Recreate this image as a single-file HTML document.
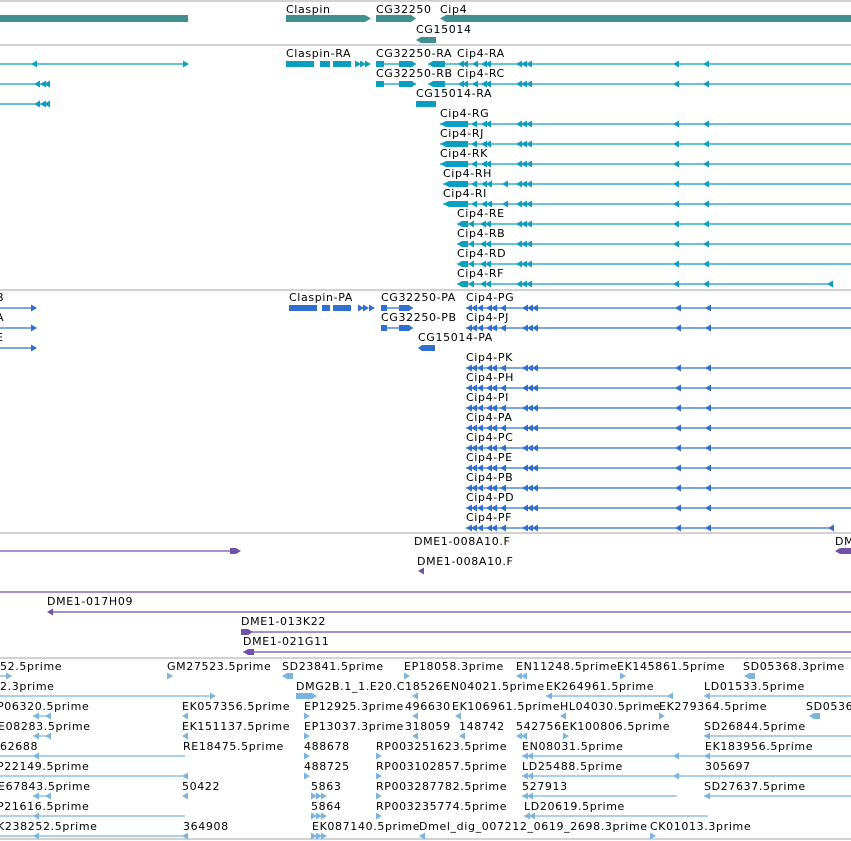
<!DOCTYPE html>
<html><head><meta charset="utf-8"><style>
html,body{margin:0;padding:0;background:#fff;width:851px;height:841px;overflow:hidden}
svg{display:block}
text{font-family:"DejaVu Sans","Liberation Sans",sans-serif;font-size:11px;letter-spacing:0.63px;fill:#000}
</style></head><body>
<svg width="851" height="841" viewBox="0 0 851 841" xmlns="http://www.w3.org/2000/svg">
<defs>
<path id="L" d="M0,0 L6,-3.5 L6,3.5Z"/>
<path id="R" d="M0,0 L-6,-3.5 L-6,3.5Z"/>
</defs>
<g stroke="#c4c4c4" stroke-width="1.5">
<line x1="0" y1="1" x2="851" y2="1"/><line x1="0" y1="45" x2="851" y2="45"/>
<line x1="0" y1="290" x2="851" y2="290"/><line x1="0" y1="533" x2="851" y2="533"/>
<line x1="0" y1="658" x2="851" y2="658"/><line x1="0" y1="839" x2="851" y2="839"/>
</g>
<g fill="#418f8f">
<rect x="0" y="15" width="188" height="7"/>
<path d="M286,15 H365 L371,18.5 L365,22 H286Z"/>
<path d="M376,15 H411 L416,18.5 L411,22 H376Z"/>
<path d="M440,18.5 L446,15 H851 V22 H446Z"/>
<path d="M416,40 L421,37 H436 V43 H421Z"/>
</g>
<text x="286" y="13">Claspin</text><text x="376" y="13">CG32250</text><text x="440" y="13">Cip4</text><text x="416" y="33">CG15014</text>
<g fill="#0a9fc0" stroke="#0a9fc0">
<g stroke-width="1.3">
<line x1="0" y1="64" x2="188" y2="64"/><line x1="428" y1="64" x2="851" y2="64"/>
<line x1="0" y1="84" x2="50" y2="84"/><line x1="428" y1="84" x2="851" y2="84"/>
<line x1="0" y1="104" x2="50" y2="104"/>
<line x1="376" y1="64" x2="416" y2="64"/><line x1="376" y1="84" x2="416" y2="84"/>
<line x1="440" y1="124" x2="851" y2="124"/><line x1="440" y1="144" x2="851" y2="144"/><line x1="440" y1="164" x2="851" y2="164"/>
<line x1="443" y1="184" x2="851" y2="184"/><line x1="443" y1="204" x2="851" y2="204"/>
<line x1="457" y1="224" x2="851" y2="224"/><line x1="457" y1="244" x2="851" y2="244"/><line x1="457" y1="264" x2="851" y2="264"/><line x1="457" y1="284" x2="833" y2="284"/>
</g>
<g stroke="none">
<use href="#L" x="31" y="64"/><use href="#R" x="189" y="64"/>
<use href="#L" x="34" y="84"/><use href="#L" x="40" y="84"/><use href="#L" x="44" y="84"/>
<use href="#L" x="34" y="104"/><use href="#L" x="40" y="104"/><use href="#L" x="44" y="104"/>
<rect x="286" y="61" width="28" height="6"/><rect x="320" y="61" width="10" height="6"/><rect x="333" y="61" width="18" height="6"/><use href="#R" x="361" y="64"/><use href="#R" x="366" y="64"/><use href="#R" x="371" y="64"/>
<rect x="376" y="61" width="8" height="6"/><path d="M399,61H412L416,64L412,67H399Z"/>
<rect x="376" y="81" width="8" height="6"/><path d="M399,81H412L416,84L412,87H399Z"/>
<rect x="416" y="101" width="20" height="6"/>
<path d="M428,64L433,61H445V67H433Z"/><path d="M428,84L433,81H445V87H433Z"/>
</g>
</g>
<g fill="#0a9fc0">
<g id="ca">
<use href="#L" x="458" y="64"/><use href="#L" x="462" y="64"/><use href="#L" x="472" y="64"/><use href="#L" x="481" y="64"/><use href="#L" x="485" y="64"/>
<use href="#L" x="516" y="64"/><use href="#L" x="521" y="64"/><use href="#L" x="526" y="64"/><use href="#L" x="673" y="64"/><use href="#L" x="703" y="64"/>
</g>
<use href="#ca" y="20"/>
<g id="cg"><path d="M440,124L446,121H468V127H446Z"/>
<use href="#L" x="471" y="124"/><use href="#L" x="481" y="124"/><use href="#L" x="485" y="124"/><use href="#L" x="516" y="124"/><use href="#L" x="521" y="124"/><use href="#L" x="526" y="124"/><use href="#L" x="673" y="124"/><use href="#L" x="703" y="124"/></g>
<use href="#cg" y="20"/><use href="#cg" y="40"/>
<g id="ch"><path d="M443,184L449,181H468V187H449Z"/>
<use href="#L" x="471" y="184"/><use href="#L" x="481" y="184"/><use href="#L" x="486" y="184"/><use href="#L" x="502" y="184"/><use href="#L" x="516" y="184"/><use href="#L" x="521" y="184"/><use href="#L" x="526" y="184"/><use href="#L" x="673" y="184"/><use href="#L" x="703" y="184"/></g>
<use href="#ch" y="20"/>
<g id="ce"><path d="M457,224L462,221H468V227H462Z"/>
<use href="#L" x="468" y="224"/><use href="#L" x="480" y="224"/><use href="#L" x="485" y="224"/><use href="#L" x="516" y="224"/><use href="#L" x="521" y="224"/><use href="#L" x="526" y="224"/><use href="#L" x="673" y="224"/><use href="#L" x="703" y="224"/></g>
<use href="#ce" y="20"/><use href="#ce" y="40"/><use href="#ce" y="60"/><use href="#L" x="827" y="284"/>
</g>
<text x="286" y="57">Claspin-RA</text><text x="376" y="57">CG32250-RA</text><text x="457" y="57">Cip4-RA</text>
<text x="376" y="77">CG32250-RB</text><text x="457" y="77">Cip4-RC</text>
<text x="416" y="97">CG15014-RA</text>
<text x="440" y="117">Cip4-RG</text><text x="440" y="137">Cip4-RJ</text><text x="440" y="157">Cip4-RK</text>
<text x="443" y="177">Cip4-RH</text><text x="443" y="197">Cip4-RI</text>
<text x="457" y="217">Cip4-RE</text><text x="457" y="237">Cip4-RB</text><text x="457" y="257">Cip4-RD</text><text x="457" y="277">Cip4-RF</text>
<g fill="#2f6fd0" stroke="#2f6fd0" stroke-width="1.3">
<line x1="0" y1="308" x2="36" y2="308"/><line x1="0" y1="328" x2="36" y2="328"/><line x1="0" y1="348" x2="36" y2="348"/>
<line x1="381" y1="308" x2="413" y2="308"/><line x1="381" y1="328" x2="413" y2="328"/>
<line x1="466" y1="308" x2="851" y2="308"/><line x1="466" y1="328" x2="851" y2="328"/>
<line x1="466" y1="368" x2="851" y2="368"/><line x1="466" y1="388" x2="851" y2="388"/><line x1="466" y1="408" x2="851" y2="408"/><line x1="466" y1="428" x2="851" y2="428"/><line x1="466" y1="448" x2="851" y2="448"/><line x1="466" y1="468" x2="851" y2="468"/><line x1="466" y1="488" x2="851" y2="488"/><line x1="466" y1="508" x2="851" y2="508"/><line x1="466" y1="528" x2="833" y2="528"/>
<g stroke="none">
<use href="#R" x="37" y="308"/><use href="#R" x="37" y="328"/><use href="#R" x="37" y="348"/>
<rect x="289" y="305" width="28" height="6"/><rect x="322" y="305" width="8" height="6"/><rect x="333" y="305" width="18" height="6"/><use href="#R" x="364" y="308"/><use href="#R" x="369" y="308"/><use href="#R" x="375" y="308"/>
<rect x="381" y="305" width="6" height="6"/><path d="M399,305H409L413,308L409,311H399Z"/>
<rect x="381" y="325" width="6" height="6"/><path d="M399,325H409L413,328L409,331H399Z"/>
<path d="M418,348L422,345H435V351H422Z"/>
<g id="pg"><use href="#L" x="466" y="308"/><use href="#L" x="471" y="308"/><use href="#L" x="477" y="308"/><use href="#L" x="486" y="308"/><use href="#L" x="491" y="308"/><use href="#L" x="500" y="308"/><use href="#L" x="522" y="308"/><use href="#L" x="527" y="308"/><use href="#L" x="532" y="308"/><use href="#L" x="675" y="308"/><use href="#L" x="705" y="308"/></g>
<use href="#pg" y="20"/><use href="#pg" y="60"/><use href="#pg" y="80"/><use href="#pg" y="100"/><use href="#pg" y="120"/><use href="#pg" y="140"/><use href="#pg" y="160"/><use href="#pg" y="180"/><use href="#pg" y="200"/><use href="#pg" y="220"/>
<use href="#L" x="828" y="528"/>
</g></g>
<text x="-4" y="301">B</text><text x="-4" y="321">A</text><text x="-4" y="341">E</text>
<text x="289" y="301">Claspin-PA</text><text x="381" y="301">CG32250-PA</text><text x="466" y="301">Cip4-PG</text>
<text x="381" y="321">CG32250-PB</text><text x="466" y="321">Cip4-PJ</text><text x="418" y="341">CG15014-PA</text>
<text x="466" y="361">Cip4-PK</text><text x="466" y="381">Cip4-PH</text><text x="466" y="401">Cip4-PI</text><text x="466" y="421">Cip4-PA</text><text x="466" y="441">Cip4-PC</text><text x="466" y="461">Cip4-PE</text><text x="466" y="481">Cip4-PB</text><text x="466" y="501">Cip4-PD</text><text x="466" y="521">Cip4-PF</text>
<g fill="#7052aa" stroke="#7052aa" stroke-width="1.3">
<line x1="0" y1="551" x2="235" y2="551"/><line x1="0" y1="592" x2="851" y2="592"/>
<line x1="48" y1="612" x2="851" y2="612"/><line x1="241" y1="632" x2="851" y2="632"/><line x1="243" y1="652" x2="851" y2="652"/>
<g stroke="none">
<path d="M230,548H236L241,551L236,554H230Z"/><path d="M835,551L840,548H851V554H840Z"/>
<use href="#L" x="418" y="571"/><use href="#L" x="47" y="612"/>
<path d="M241,629H248L253,632L248,635H241Z"/><path d="M243,652L248,649H254V655H248Z"/>
</g></g>
<text x="414" y="545">DME1-008A10.F</text><text x="835" y="545">DM</text><text x="417" y="565">DME1-008A10.F</text>
<text x="47" y="605">DME1-017H09</text><text x="241" y="625">DME1-013K22</text><text x="243" y="645">DME1-021G11</text>
<g fill="#7ab4e0" stroke="#7ab4e0" stroke-width="1.3">
<line x1="0" y1="676" x2="12" y2="676"/>
<line x1="0" y1="696" x2="215" y2="696"/><line x1="546" y1="696" x2="672" y2="696"/><line x1="704" y1="696" x2="851" y2="696"/>
<line x1="33" y1="716" x2="50" y2="716"/><line x1="33" y1="736" x2="50" y2="736"/><line x1="704" y1="736" x2="851" y2="736"/>
<line x1="0" y1="756" x2="185" y2="756"/><line x1="522" y1="756" x2="851" y2="756"/>
<line x1="0" y1="776" x2="185" y2="776"/><line x1="522" y1="776" x2="851" y2="776"/>
<line x1="33" y1="796" x2="50" y2="796"/><line x1="522" y1="796" x2="677" y2="796"/><line x1="704" y1="796" x2="851" y2="796"/>
<line x1="0" y1="816" x2="185" y2="816"/><line x1="524" y1="816" x2="708" y2="816"/>
<line x1="0" y1="836" x2="185" y2="836"/>
<g stroke="none">
<use href="#R" x="12" y="676"/><use href="#R" x="173" y="676"/><path d="M282,676L287,673H293V679H287Z"/><use href="#R" x="410" y="676"/><use href="#L" x="516" y="676"/><use href="#L" x="521" y="676"/><use href="#R" x="626" y="676"/><path d="M744,676L749,673H755V679H749Z"/>
<use href="#R" x="216" y="696"/><path d="M296,693H312L317,696L312,699H296Z"/><use href="#L" x="412" y="696"/><use href="#L" x="546" y="696"/><use href="#L" x="667" y="696"/><use href="#L" x="704" y="696"/>
<use href="#L" x="33" y="716"/><use href="#L" x="45" y="716"/><use href="#L" x="182" y="716"/><use href="#R" x="310" y="716"/><use href="#L" x="412" y="716"/><use href="#L" x="455" y="716"/><use href="#L" x="560" y="716"/><use href="#R" x="665" y="716"/><path d="M809,716L814,713H820V719H814Z"/>
<use href="#L" x="33" y="736"/><use href="#L" x="45" y="736"/><use href="#L" x="182" y="736"/><use href="#R" x="310" y="736"/><use href="#L" x="412" y="736"/><use href="#L" x="459" y="736"/><use href="#L" x="516" y="736"/><use href="#L" x="521" y="736"/><use href="#R" x="569" y="736"/><use href="#L" x="704" y="736"/>
<use href="#L" x="33" y="756"/><use href="#R" x="310" y="756"/><use href="#R" x="382" y="756"/><use href="#L" x="522" y="756"/><use href="#L" x="527" y="756"/><use href="#L" x="673" y="756"/><use href="#L" x="704" y="756"/>
<use href="#L" x="182" y="776"/><use href="#R" x="310" y="776"/><use href="#R" x="382" y="776"/><use href="#L" x="522" y="776"/><use href="#L" x="527" y="776"/><use href="#L" x="673" y="776"/>
<use href="#L" x="33" y="796"/><use href="#L" x="45" y="796"/><use href="#L" x="182" y="796"/><use href="#R" x="317" y="796"/><use href="#R" x="322" y="796"/><use href="#R" x="327" y="796"/><use href="#R" x="382" y="796"/><use href="#L" x="522" y="796"/><use href="#L" x="527" y="796"/><use href="#L" x="704" y="796"/>
<use href="#L" x="33" y="816"/><use href="#R" x="317" y="816"/><use href="#R" x="322" y="816"/><use href="#R" x="327" y="816"/><use href="#R" x="382" y="816"/><use href="#L" x="524" y="816"/><use href="#L" x="529" y="816"/>
<use href="#L" x="33" y="836"/><use href="#L" x="182" y="836"/><use href="#R" x="317" y="836"/><use href="#R" x="322" y="836"/><use href="#R" x="327" y="836"/><use href="#L" x="419" y="836"/><use href="#R" x="656" y="836"/>
</g></g>
<text x="0" y="670">52.5prime</text><text x="167" y="670">GM27523.5prime</text><text x="282" y="670">SD23841.5prime</text><text x="404" y="670">EP18058.3prime</text><text x="516" y="670">EN11248.5prime</text><text x="617" y="670">EK145861.5prime</text><text x="743" y="670">SD05368.3prime</text>
<text x="0" y="690">2.3prime</text><text x="296" y="690">DMG2B.1_1.E20.C18526EN04021.5prime</text><text x="546" y="690">EK264961.5prime</text><text x="704" y="690">LD01533.5prime</text>
<text x="-3" y="710">P06320.5prime</text><text x="182" y="710">EK057356.5prime</text><text x="304" y="710">EP12925.3prime</text><text x="405" y="710">496630</text><text x="452" y="710">EK106961.5prime</text><text x="560" y="710">HL04030.5prime</text><text x="659" y="710">EK279364.5prime</text><text x="806" y="710">SD0536</text>
<text x="-2" y="730">E08283.5prime</text><text x="182" y="730">EK151137.5prime</text><text x="304" y="730">EP13037.3prime</text><text x="405" y="730">318059</text><text x="459" y="730">148742</text><text x="516" y="730">542756</text><text x="562" y="730">EK100806.5prime</text><text x="704" y="730">SD26844.5prime</text>
<text x="0" y="750">62688</text><text x="183" y="750">RE18475.5prime</text><text x="304" y="750">488678</text><text x="376" y="750">RP003251623.5prime</text><text x="522" y="750">EN08031.5prime</text><text x="705" y="750">EK183956.5prime</text>
<text x="-3" y="770">P22149.5prime</text><text x="304" y="770">488725</text><text x="376" y="770">RP003102857.5prime</text><text x="522" y="770">LD25488.5prime</text><text x="705" y="770">305697</text>
<text x="-2" y="790">E67843.5prime</text><text x="182" y="790">50422</text><text x="311" y="790">5863</text><text x="376" y="790">RP003287782.5prime</text><text x="522" y="790">527913</text><text x="704" y="790">SD27637.5prime</text>
<text x="-3" y="810">P21616.5prime</text><text x="311" y="810">5864</text><text x="376" y="810">RP003235774.5prime</text><text x="524" y="810">LD20619.5prime</text>
<text x="-3" y="830">K238252.5prime</text><text x="183" y="830">364908</text><text x="312" y="830">EK087140.5prime</text><text x="419" y="830">Dmel_dig_007212_0619_2698.3prime</text><text x="650" y="830">CK01013.3prime</text>
</svg>
</body></html>
